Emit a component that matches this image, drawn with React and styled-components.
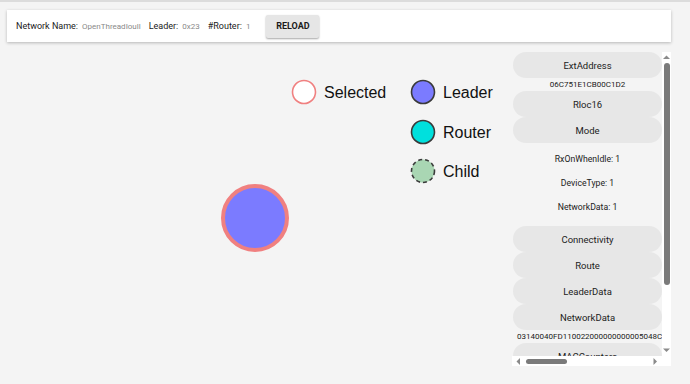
import React from "react";
import styled, { createGlobalStyle } from "styled-components";

const GlobalStyle = createGlobalStyle`
  html, body {
    margin: 0;
    padding: 0;
    background: #f4f4f4;
    font-family: Roboto, "Liberation Sans", sans-serif;
  }
`;

const networkData =
  "03140040FD110022000000000005048C000010E000203000C0F0B029C1E4A0D1100015002FD3B0F6B1A4C000000000000030E0000010C02";

function Header() {
  return (
    <Bar>
      <Field>
        <Label>Network Name:</Label>
        <Value>OpenThreadIoull</Value>
      </Field>
      <Field>
        <Label>Leader:</Label>
        <Value>0x23</Value>
      </Field>
      <Field>
        <Label>#Router:</Label>
        <Value>1</Value>
      </Field>
      <ReloadButton>RELOAD</ReloadButton>
    </Bar>
  );
}

function Legend() {
  const items = [
    { y: 40, fill: "#7b7bff", label: "Leader" },
    { y: 80, fill: "#00e0dd", label: "Router" },
    { y: 119, fill: "#a9d6b3", label: "Child", dashed: true },
  ];
  return (
    <g>
      <circle cx="304" cy="40" r="11.5" fill="#fff" stroke="#f08080" strokeWidth="1.6" />
      <LegendText x="324" y="40" dy="0.35em">Selected</LegendText>
      {items.map((it) => (
        <g key={it.label}>
          <circle
            cx="423"
            cy={it.y}
            r="11.5"
            fill={it.fill}
            stroke="#3a3a3a"
            strokeWidth="1.6"
            strokeDasharray={it.dashed ? "4 3" : undefined}
          />
          <LegendText x="443" y={it.y} dy="0.35em">
            {it.label}
          </LegendText>
        </g>
      ))}
    </g>
  );
}

function Graph() {
  return (
    <Canvas>
      <svg width="512" height="314">
        <Legend />
        <circle cx="255" cy="166" r="32" fill="#7b7bff" stroke="#f08080" strokeWidth="4" />
      </svg>
    </Canvas>
  );
}

// small triangle for the scrollbar arrow buttons
function Arrow({ dir }) {
  const pts = {
    up: "1,5 4.5,1.5 8,5",
    down: "1,1.5 4.5,5 8,1.5",
    left: "5,1 1.5,4.5 5,8",
    right: "1.5,1 5,4.5 1.5,8",
  }[dir];
  const vertical = dir === "up" || dir === "down";
  return (
    <svg width={vertical ? 9 : 7} height={vertical ? 7 : 9}>
      <polygon points={pts} fill="#8a8a8a" />
    </svg>
  );
}

function ScrollBar({ vertical, start, size }) {
  return (
    <Track $vertical={vertical}>
      <Arrow dir={vertical ? "up" : "left"} />
      <Lane $vertical={vertical}>
        <Thumb
          $vertical={vertical}
          style={vertical ? { marginTop: start, height: size } : { marginLeft: start, width: size }}
        />
      </Lane>
      <Arrow dir={vertical ? "down" : "right"} />
    </Track>
  );
}

function Sidebar() {
  return (
    <Panel>
      <Viewport>
        <Column>
          <Pill>ExtAddress</Pill>
          <Hex>06C751E1CB00C1D2</Hex>
          <Pill>Rloc16</Pill>
          <Pill>Mode</Pill>
          <Details>
            <Line>RxOnWhenIdle: 1</Line>
            <Line>DeviceType: 1</Line>
            <Line>NetworkData: 1</Line>
          </Details>
          <Pill>Connectivity</Pill>
          <Pill>Route</Pill>
          <Pill>LeaderData</Pill>
          <Pill>NetworkData</Pill>
          <Hex $left>{networkData}</Hex>
          <Pill>MACCounters</Pill>
          <Pill>ChildTable</Pill>
        </Column>
      </Viewport>
      <ScrollBar vertical start={2} size={222} />
      <ScrollBar start={4} size={41} />
      <Corner />
    </Panel>
  );
}

export default function App() {
  return (
    <Page>
      <GlobalStyle />
      <Header />
      <Main>
        <Graph />
        <Sidebar />
      </Main>
    </Page>
  );
}

const Page = styled.div`
  height: 384px;
  box-sizing: border-box;
  border-top: 2px solid #dcdcdc;
  display: flex;
  flex-direction: column;
  overflow: hidden;
`;

const Bar = styled.header`
  margin: 8px 19px 0 7px;
  height: 32px;
  background: #fff;
  box-shadow: 0 1px 3px rgba(0, 0, 0, 0.25);
  display: flex;
  align-items: center;
  padding-left: 9px;
  gap: 8px;
`;

const Field = styled.div`
  display: flex;
  align-items: baseline;
  gap: 4px;
`;

const Label = styled.span`
  font-size: 9px;
  color: #1a1a1a;
`;

const Value = styled.span`
  font-size: 8px;
  color: #8a8a8a;
`;

const ReloadButton = styled.button`
  margin-left: 8px;
  width: 53px;
  height: 23px;
  border: none;
  border-radius: 2px;
  background: #e6e6e6;
  box-shadow: 0 1px 2px rgba(0, 0, 0, 0.35);
  font-family: Roboto, "Liberation Sans", sans-serif;
  font-size: 9px;
  font-weight: 700;
  color: #1a1a1a;
  padding: 0;
`;

const Main = styled.div`
  display: flex;
  margin-top: 10px;
  height: 314px;
`;

const Canvas = styled.div`
  width: 512px;
  flex-shrink: 0;
`;

const LegendText = styled.text`
  font-family: "Liberation Sans", Arial, sans-serif;
  font-size: 16px;
  fill: #111;
`;

const Panel = styled.div`
  width: 159px;
  height: 314px;
  display: grid;
  grid-template-columns: 150px 9px;
  grid-template-rows: 304px 10px;
`;

const Viewport = styled.div`
  overflow: hidden;
`;

const Track = styled.div`
  background: #fff;
  display: flex;
  flex-direction: ${(p) => (p.$vertical ? "column" : "row")};
  align-items: center;
  padding: ${(p) => (p.$vertical ? "2px 0" : "0 3px")};
`;

const Lane = styled.div`
  flex: 1;
  align-self: stretch;
  display: flex;
  flex-direction: ${(p) => (p.$vertical ? "column" : "row")};
  align-items: center;
`;

const Thumb = styled.div`
  background: #7a7a7a;
  border-radius: 3px;
  width: ${(p) => (p.$vertical ? "6px" : "auto")};
  height: ${(p) => (p.$vertical ? "auto" : "5px")};
`;

const Corner = styled.div`
  background: #fff;
`;

const Column = styled.div`
  width: 149px;
  padding-left: 1px;
  display: flex;
  flex-direction: column;
`;

const Pill = styled.div`
  height: 26px;
  flex-shrink: 0;
  border-radius: 13px;
  background: #e7e7e7;
  display: flex;
  align-items: center;
  justify-content: center;
  font-size: 9.5px;
  color: #222;
`;

const Hex = styled.div`
  height: 13px;
  line-height: 13px;
  font-size: 8px;
  color: #1a1a1a;
  white-space: nowrap;
  text-align: ${(p) => (p.$left ? "left" : "center")};
  padding-left: ${(p) => (p.$left ? "4px" : "0")};
`;

const Details = styled.div`
  padding: 4px 0 7px;
  display: flex;
  flex-direction: column;
`;

const Line = styled.div`
  height: 24px;
  line-height: 24px;
  text-align: center;
  font-size: 8.7px;
  color: #222;
`;
